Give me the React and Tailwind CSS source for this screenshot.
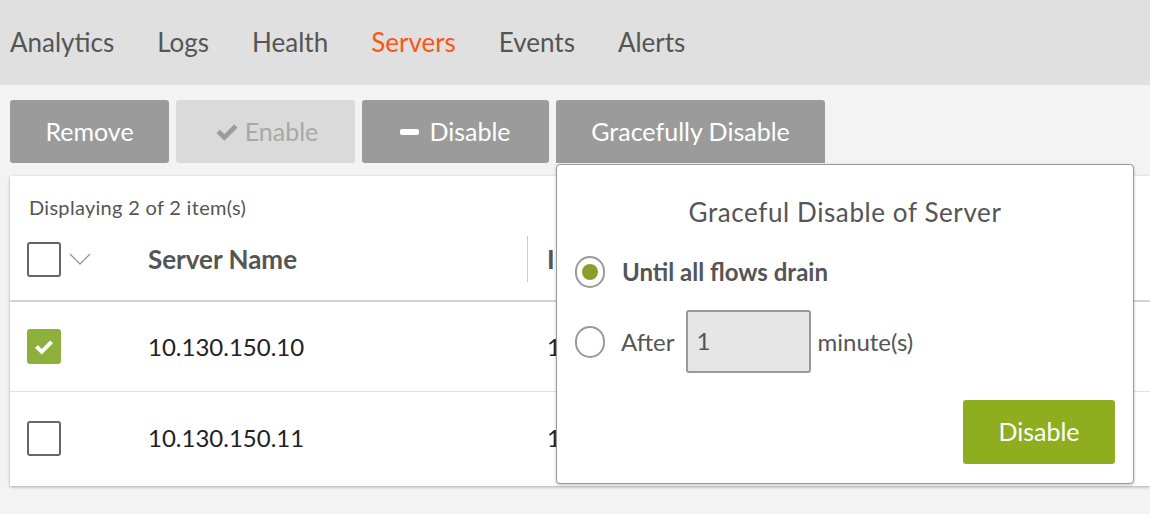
const font = { fontFamily: 'Lato, "Open Sans", sans-serif' };

function Check({ className }) {
  return (
    <svg viewBox="0 0 16 16" className={className} fill="currentColor">
      <path d="M2 8.6l1.9-1.9 2.6 2.6 5.6-5.7L14 5.5l-7.5 7.5z" />
    </svg>
  );
}

function Box({ checked }) {
  if (checked) {
    return (
      <div className="w-[34px] h-[35px] rounded-[3px] bg-[#8db03c] flex items-center justify-center">
        <Check className="w-[24px] h-[24px] text-white" />
      </div>
    );
  }
  return <div className="w-[34px] h-[35px] rounded-[3px] border-2 border-[#666] bg-white" />;
}

export default function App() {
  const tabs = ['Analytics', 'Logs', 'Health', 'Servers', 'Events', 'Alerts'];
  return (
    <div className="relative w-[1150px] h-[514px] overflow-hidden bg-[#f3f3f3]" style={font}>
      <div className="h-[85px] bg-[#e0e0e0] flex items-center gap-[43px] pl-[10px] text-[26px]">
        {tabs.map((t) => (
          <span key={t} className={t === 'Servers' ? 'text-[#ff5515]' : 'text-[#555]'}>
            {t}
          </span>
        ))}
      </div>

      <div className="flex gap-[7px] pl-[10px] pt-[15px] text-[25px]">
        <button className="w-[159px] h-[63px] rounded-[3px] bg-[#9b9b9b] text-white">Remove</button>
        <button className="w-[179px] h-[63px] rounded-[3px] bg-[#dadada] text-[#a8a8a8] flex items-center justify-center gap-[4px]">
          <Check className="w-[28px] h-[28px] text-[#9b9b9b]" />
          Enable
        </button>
        <button className="w-[187px] h-[63px] rounded-[3px] bg-[#9b9b9b] text-white flex items-center justify-center gap-[10px]">
          <span className="w-[19px] h-[6px] rounded-[2px] bg-white" />
          Disable
        </button>
        <button className="w-[269px] h-[63px] rounded-t-[3px] bg-[#9b9b9b] text-white">Gracefully Disable</button>
      </div>

      <div className="ml-[10px] mt-[13px] h-[310px] bg-white shadow-[0_1px_3px_rgba(0,0,0,0.3)]">
        <div className="pt-[20px] pl-[19px] text-[20px] tracking-[0.3px] leading-[22px] text-[#555]">
          Displaying 2 of 2 item(s)
        </div>
        <div className="h-[84px] flex items-center border-b-2 border-[#d4d4d4]">
          <div className="w-[138px] pl-[17px] flex items-center gap-[8px]">
            <Box />
            <svg viewBox="0 0 22 12" className="w-[22px] h-[12px]" fill="none" stroke="#999" strokeWidth="1.3">
              <path d="M1 1l10 10 10-10" />
            </svg>
          </div>
          <div className="w-[379px] text-[26px] font-bold text-[#555]">Server Name</div>
          <div className="w-px h-[46px] bg-[#ccc]" />
          <div className="pl-[19px] text-[26px] font-bold text-[#555]">IP</div>
        </div>
        {['10.130.150.10', '10.130.150.11'].map((ip, i) => (
          <div
            key={ip}
            className={`flex items-center ${i === 0 ? 'h-[90px] border-b border-[#e2e2e2]' : 'h-[92px]'}`}
          >
            <div className="w-[138px] pl-[17px]">
              <Box checked={i === 0} />
            </div>
            <div className="w-[380px] text-[24px] text-[#222]">{ip}</div>
            <div className="pl-[19px] text-[24px] text-[#222]">{ip}</div>
          </div>
        ))}
      </div>

      <div className="absolute left-[556px] top-[164px] w-[578px] h-[320px] bg-white border border-[#9a9a9a] rounded-[4px] shadow-[0_1px_3px_rgba(0,0,0,0.25)] px-[18px]">
        <div className="pt-[31px] text-center text-[26px] tracking-[0.6px] leading-[32px] text-[#555]">
          Graceful Disable of Server
        </div>
        <div className="mt-[26px] flex items-center gap-[17px]">
          <div className="w-[30px] h-[32px] rounded-full border-2 border-[#999] flex items-center justify-center">
            <div className="w-[16px] h-[16px] rounded-full bg-[#8a9f2b]" />
          </div>
          <span className="text-[24px] font-bold text-[#555]">Until all flows drain</span>
        </div>
        <div className="mt-[20px] flex items-center">
          <div className="w-[30px] h-[32px] rounded-full border-2 border-[#999] bg-white" />
          <span className="ml-[16px] text-[24px] leading-[28px] text-[#555]">After</span>
          <div className="ml-[11px] w-[125px] h-[63px] rounded-[3px] border-2 border-[#999] bg-[#e6e6e6] pl-[9px] pt-[15px] text-[24px] leading-[28px] text-[#555]">
            1
          </div>
          <span className="ml-[7px] text-[24px] leading-[28px] text-[#555]">minute(s)</span>
        </div>
        <div className="mt-[27px] flex justify-end">
          <button className="w-[152px] h-[64px] rounded-[3px] bg-[#8fae1f] text-white text-[25px]">Disable</button>
        </div>
      </div>
    </div>
  );
}
